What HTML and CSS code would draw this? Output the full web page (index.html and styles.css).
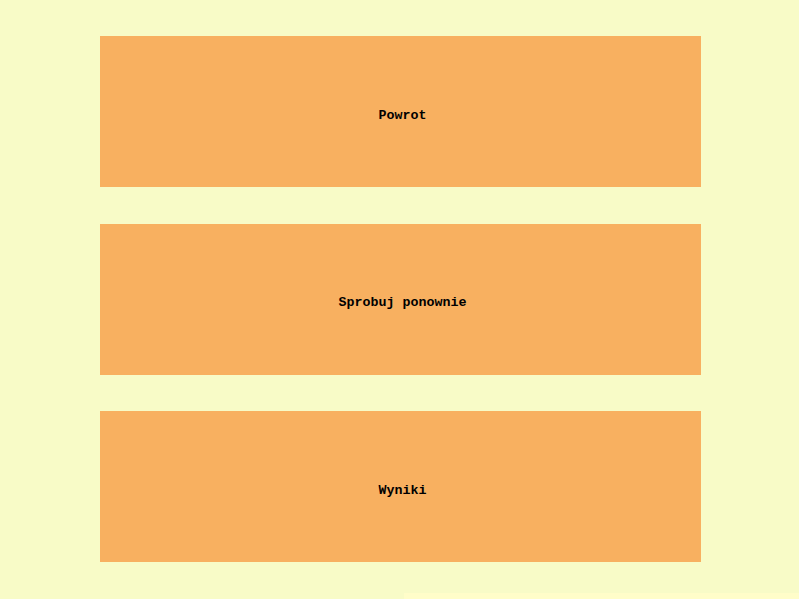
FILE: index.html
```html
<!DOCTYPE html>
<html lang="pl">
<head>
    <meta charset="UTF-8">
    <title>Koniec gry</title>
    <link rel="stylesheet" href="styles.css">
</head>
<body>

    <!-- Menu po zakonczeniu gry -->
    <div class="menu">
        <button class="menu-btn">Powrot</button>
        <button class="menu-btn">Sprobuj ponownie</button>
        <button class="menu-btn">Wyniki</button>
    </div>

    <div class="bottom-strip"></div>

</body>
</html>
```

FILE: styles.css
```css
html, body {
    height: 100%;
}

body {
    margin: 0;
    background-color: #f8fbc7;
    font-family: "Liberation Mono", "DejaVu Sans Mono", monospace;
    position: relative;
    overflow: hidden;
}

.menu {
    display: flex;
    flex-direction: column;
    gap: 36.5px;
    width: 601px;
    padding-top: 36px;
    margin-left: 100px;
}

.menu-btn {
    height: 151px;
    border: none;
    background-color: #f8b060;
    color: #000000;
    font-family: inherit;
    font-size: 13.33px;
    font-weight: bold;
    padding: 7px 0 0 4px;
    cursor: pointer;
}

/* pasek na dole ekranu */
.bottom-strip {
    position: absolute;
    left: 404px;
    right: 0;
    bottom: 0;
    height: 6px;
    background-color: #fffdc9;
}
```
